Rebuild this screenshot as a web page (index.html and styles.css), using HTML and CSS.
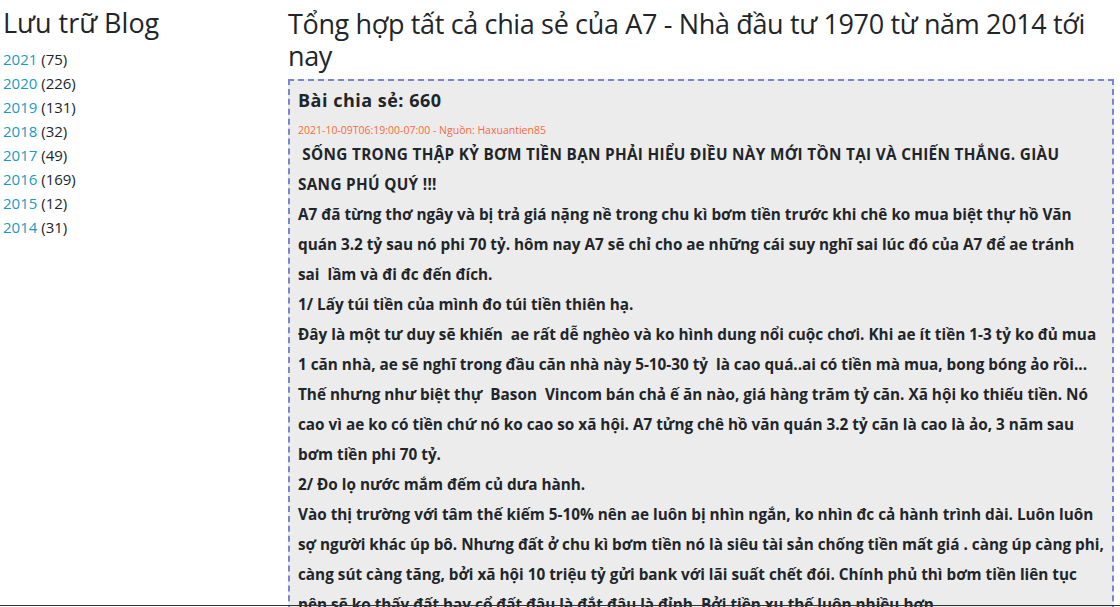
FILE: index.html
```html
<!DOCTYPE html>
<html lang="vi">
<head>
<meta charset="utf-8">
<title>Tổng hợp tất cả chia sẻ của A7</title>
<link rel="stylesheet" href="styles.css">
</head>
<body>
<div class="page">
  <aside class="sidebar">
    <h2 class="side-title">Lưu trữ Blog</h2>
    <ul class="years">
      <li><a href="#">2021</a> (75)</li>
      <li><a href="#">2020</a> (226)</li>
      <li><a href="#">2019</a> (131)</li>
      <li><a href="#">2018</a> (32)</li>
      <li><a href="#">2017</a> (49)</li>
      <li><a href="#">2016</a> (169)</li>
      <li><a href="#">2015</a> (12)</li>
      <li><a href="#">2014</a> (31)</li>
    </ul>
  </aside>
  <main class="main">
    <h1 class="page-title">Tổng hợp tất cả chia sẻ của A7 - Nhà đầu tư 1970 từ năm 2014 tới nay</h1>
    <article class="post">
      <h2 class="post-title">Bài chia sẻ: 660</h2>
      <div class="post-meta">2021-10-09T06:19:00-07:00 - Nguồn: Haxuantien85</div>
      <div class="post-body">
        <span class="lead-line">&nbsp;SỐNG TRONG THẬP KỶ BƠM TIỀN BẠN PHẢI HIỂU ĐIỀU NÀY MỚI TỒN TẠI VÀ CHIẾN THẮNG. GIÀU SANG PHÚ QUÝ !!!</span><br>
        A7 đã từng thơ ngây và bị trả giá nặng nề trong chu kì bơm tiền trước khi chê ko mua biệt thự hồ Văn quán 3.2 tỷ sau nó phi 70 tỷ. hôm nay A7 sẽ chỉ cho ae những cái suy nghĩ sai lúc đó của A7 để ae tránh sai&nbsp;&nbsp;lầm và đi đc đến đích.<br>
        1/ Lấy túi tiền của mình đo túi tiền thiên hạ.<br>
        Đây là một tư duy sẽ khiến &nbsp;ae rất dễ nghèo và ko hình dung nổi cuộc chơi. Khi ae ít tiền 1-3 tỷ ko đủ mua 1 căn nhà, ae sẽ nghĩ trong đầu căn nhà này 5-10-30 tỷ &nbsp;là cao quá..ai có tiền mà mua, bong bóng ảo rồi... Thế nhưng như biệt thự &nbsp;Bason &nbsp;Vincom bán chả ế ăn nào, giá hàng trăm tỷ căn. Xã hội ko thiếu tiền. Nó cao vì ae ko có tiền chứ nó ko cao so xã hội. A7 tửng chê hồ văn quán 3.2 tỷ căn là cao là ảo, 3 năm sau bơm tiền phi 70 tỷ.<br>
        2/ Đo lọ nước mắm đếm củ dưa hành.<br>
        Vào thị trường với tâm thế kiếm 5-10% nên ae luôn bị nhìn ngắn, ko nhìn đc cả hành trình dài. Luôn luôn sợ người khác úp bô. Nhưng đất ở chu kì bơm tiền nó là siêu tài sản chống tiền mất giá . càng úp càng phi, càng sút càng tăng, bởi xã hội 10 triệu tỷ gửi bank với lãi suất chết đói. Chính phủ thì bơm tiền liên tục nên sẽ ko thấy đất hay cổ đất đâu là đắt đâu là đỉnh. Bởi tiền xu thế luôn nhiều hơn.<br>
        3/ Sợ hãi khi thị trường đi ngang.
      </div>
    </article>
  </main>
</div>
<div class="bottom-edge"></div>
</body>
</html>
```

FILE: styles.css
```css
html, body {
  margin: 0;
  padding: 0;
  background: #ffffff;
}

body {
  font-family: "Open Sans", "Noto Sans", sans-serif;
  color: #212529;
  font-size: 16px;
  line-height: 1.5;
}

.page {
  display: grid;
  grid-template-columns: 285px 1fr;
  padding: 0 6px 0 3px;
}

.side-title {
  font-size: 27px;
  font-weight: 400;
  line-height: 1.2;
  margin: 7px 0 8px;
}

.years {
  list-style: none;
  margin: 0;
  padding: 0;
  font-size: 15px;
  line-height: 24px;
}

.years a {
  color: #1a9bbd;
  text-decoration: none;
}

.page-title {
  font-size: 27px;
  font-weight: 400;
  letter-spacing: -0.35px;
  line-height: 32px;
  margin: 8px 0 7px;
}

.post {
  background: #ececec;
  border: 2px dashed #7986cb;
  padding: 6px 8px 0;
}

.post-title {
  font-size: 18px;
  font-weight: 700;
  letter-spacing: 0.5px;
  line-height: 26px;
  margin: 0 0 6px;
}

.post-meta {
  font-size: 10.5px;
  color: #fa6a3c;
  line-height: 17px;
  padding-top: 3px;
}

.post-body {
  font-size: 15.3px;
  font-weight: 700;
  line-height: 30px;
}

.lead-line {
  letter-spacing: 0.32px;
}

.bottom-edge {
  position: fixed;
  left: 0;
  right: 0;
  bottom: 1px;
  height: 1px;
  background: #333333;
}
```
